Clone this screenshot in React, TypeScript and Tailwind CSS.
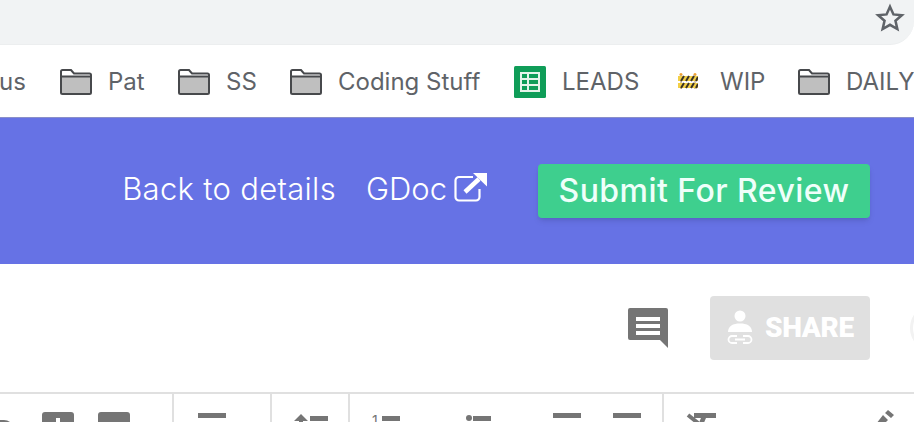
function Folder() {
  return (
    <svg width="32" height="26" viewBox="0 0 32 26" className="shrink-0">
      <path d="M1 8h30v15.500c0 .8-.7 1.500-1.500 1.500h-27C1.700 25 1 24.300 1 23.500Z" fill="#bfbfbf" />
      <path d="M1 23.500V2.500C1 1.700 1.700 1 2.500 1h8.500l3 3.500h15.500c.8 0 1.500.7 1.500 1.500v17.500c0 .8-.7 1.500-1.500 1.500h-27C1.700 25 1 24.300 1 23.500ZM1 7.500h30" fill="none" stroke="#47494c" strokeWidth="2" />
    </svg>
  );
}

function SheetsIcon() {
  return (
    <svg width="32" height="32" viewBox="0 0 32 32" className="shrink-0">
      <rect width="32" height="32" rx="1.500" fill="#0f9d58" />
      <path d="M7 7h18v18H7ZM7 13h18M7 19h18M14 7v18" fill="none" stroke="#e6f4ea" strokeWidth="2" />
    </svg>
  );
}

function BarrierIcon() {
  return (
    <svg width="20" height="20" viewBox="0 0 20 20" className="shrink-0">
      <circle cx="3" cy="2.500" r="1.500" fill="#f0a030" />
      <circle cx="17" cy="2.500" r="1.500" fill="#f0a030" />
      <path d="M3 3v14M17 3v14" stroke="#c9b48a" strokeWidth="1.500" />
      <rect y="4" width="20" height="5" fill="#f3cf45" />
      <rect y="11" width="20" height="5" fill="#f3cf45" />
      <path d="M3 9l3-5M8 9l3-5M13 9l3-5M18 9l2-4M3 16l3-5M8 16l3-5M13 16l3-5M18 16l2-4" stroke="#37322a" strokeWidth="2" />
    </svg>
  );
}

function Bookmark({ label, icon, className }: { label: string; icon: React.ReactNode; className: string }) {
  return (
    <div className={`flex items-center shrink-0 ${className}`}>
      {icon}
      <span className="whitespace-nowrap">{label}</span>
    </div>
  );
}

function ToolbarBar({ className }: { className: string }) {
  return <div className={`h-[5px] bg-[#757575] shrink-0 ${className}`} />;
}

export default function App() {
  return (
    <div className="w-[914px] h-[422px] overflow-hidden bg-white font-['Inter','Liberation_Sans',sans-serif]">
      {/* Browser address bar */}
      <div className="h-[46px] bg-white">
        <div className="h-[45px] bg-[#f1f3f4] border-b border-[#eceeef] rounded-br-[24px] flex justify-end items-center pr-[8px] pb-[9px]">
          <svg width="32" height="32" viewBox="0 0 24 24" fill="none" stroke="#5f6368" strokeWidth="1.900" strokeLinejoin="miter">
            <path d="M12 3.500l2.600 5.800 6.300.6-4.800 4.200 1.400 6.200L12 17.100l-5.500 3.200 1.400-6.200-4.800-4.200 6.300-.6Z" />
          </svg>
        </div>
      </div>

      {/* Bookmarks */}
      <div className="h-[71px] bg-white flex items-center text-[24px] text-[#5f6368] whitespace-nowrap">
        <span className="w-[60px] shrink-0 ml-[-1px] mr-[1px]">us</span>
        <Bookmark label="Pat" icon={<Folder />} className="gap-[16px] w-[118px]" />
        <Bookmark label="SS" icon={<Folder />} className="gap-[16px] w-[112px]" />
        <Bookmark label="Coding Stuff" icon={<Folder />} className="gap-[16px] w-[224px]" />
        <Bookmark label="LEADS" icon={<SheetsIcon />} className="gap-[16px] w-[164px]" />
        <Bookmark label="WIP" icon={<BarrierIcon />} className="gap-[22px] w-[120px]" />
        <Bookmark label="DAILY" icon={<Folder />} className="gap-[16px]" />
      </div>

      {/* Purple header */}
      <div className="h-[147px] bg-[#6672e5] border-t border-[#8a8fc9] flex items-center justify-end pr-[44px] text-white">
        <a className="text-[31px] tracking-[0.3px] font-light text-white mr-[30px] mb-[3px]">Back to details</a>
        <a className="flex items-center text-[31px] font-light text-white mr-[50px] mb-[3px]">
          GDoc
          <svg width="34" height="30" viewBox="0 0 34 30" fill="none" className="ml-[7px] mb-[6px]">
            <path d="M19 5H5a3.500 3.500 0 0 0-3.500 3.500V25A3.500 3.500 0 0 0 5 28.500h17a3.500 3.500 0 0 0 3.500-3.500v-8" stroke="#fff" strokeWidth="2.200" />
            <path d="M11 20 25 7" stroke="#fff" strokeWidth="4.500" />
            <path d="M19 1H33v13.500Z" fill="#fff" />
          </svg>
        </a>
        <button className="w-[332px] h-[54px] rounded-[4px] bg-[#3ecf8e] shadow-md text-[32px] tracking-[0.45px] font-medium text-[#effffa]">
          Submit For Review
        </button>
      </div>

      {/* Document actions */}
      <div className="h-[128px] bg-white relative flex items-center justify-end pr-[44px]">
        <svg width="42" height="42" viewBox="0 0 42 42" className="mr-[41px]">
          <path d="M3 1h36a2 2 0 0 1 2 2v38l-8-8H3a2 2 0 0 1-2-2V3a2 2 0 0 1 2-2Z" fill="#757575" />
          <path d="M9 10h24v4H9ZM9 17h24v4H9ZM9 24h24v4H9Z" fill="#fff" />
        </svg>
        <div className="w-[160px] h-[64px] rounded-[4px] bg-[#e0e0e0] flex items-center pl-[16px] gap-[11px]">
          <svg width="28" height="36" viewBox="0 0 28 36" fill="#fff">
            <circle cx="14" cy="6" r="5.500" />
            <path d="M2 22c0-6 5-8.500 12-8.500S26 16 26 22Z" />
            <path d="M11 26H6a3.500 3.500 0 0 0 0 7h5M17 26h5a3.500 3.500 0 0 1 0 7h-5M9 29.500h10" fill="none" stroke="#fff" strokeWidth="1.800" />
          </svg>
          <span className="font-['Roboto',sans-serif] font-black text-[28px] text-white tracking-[-0.3px]">SHARE</span>
        </div>
        <div className="absolute left-[910px] top-[40px] w-[48px] h-[48px] rounded-full border-[3px] border-[#f2f2f2]" />
      </div>

      {/* Editor toolbar, cut off by the window */}
      <div className="h-[30px] border-t-2 border-[#e0e0e0] flex">
        <div className="w-[174px] border-r-2 border-[#e0e0e0] flex items-start pt-[18px] shrink-0">
          <div className="w-[14px] h-[10px] rounded-tr-full bg-[#757575] mt-[8px] mr-[28px]" />
          <div className="relative w-[32px] h-[20px] rounded-[3px] bg-[#757575] mr-[24px]">
            <div className="absolute left-[14px] top-[6px] w-[4px] h-[14px] bg-white" />
          </div>
          <div className="w-[32px] h-[20px] rounded-[3px] bg-[#757575]" />
        </div>
        <div className="w-[98px] border-r-2 border-[#e0e0e0] pt-[19px] pl-[24px] shrink-0">
          <ToolbarBar className="w-[28px]" />
        </div>
        <div className="w-[78px] border-r-2 border-[#e0e0e0] pt-[21px] pl-[21px] flex shrink-0">
          <svg width="16" height="10" viewBox="0 0 16 10" className="mt-[-1px]">
            <path d="M8 0l7 7H10v3H6V7H1Z" fill="#757575" />
          </svg>
          <ToolbarBar className="w-[18px] ml-[1px] mt-[1px]" />
        </div>
        <div className="w-[314px] border-r-2 border-[#e0e0e0] pl-[22px] flex items-start shrink-0">
          <span className="text-[14px] leading-none text-[#757575] w-[10px] pt-[20px]">1</span>
          <ToolbarBar className="w-[18px] mt-[22px] mr-[66px]" />
          <div className="w-[6px] h-[6px] mt-[21px] rounded-full bg-[#757575] mr-[1px]" />
          <ToolbarBar className="w-[18px] mt-[22px] mr-[62px]" />
          <ToolbarBar className="w-[28px] mt-[19px] mr-[32px]" />
          <ToolbarBar className="w-[28px] mt-[19px]" />
        </div>
        <div className="flex-1 flex items-start justify-between pl-[22px] pr-[20px] pt-[19px]">
          <svg width="30" height="12" viewBox="0 0 30 12">
            <path d="M8 0h22v5H20l-3 7h-5l3-7H8Z" fill="#757575" />
            <path d="M2 2l10 8" stroke="#757575" strokeWidth="4" />
          </svg>
          <svg width="20" height="14" viewBox="0 0 20 14" className="mt-[-3px]">
            <path d="M14 0l6 5-3 3-6-5ZM9 5l5 5-4 4H2Z" fill="#757575" />
          </svg>
        </div>
      </div>
    </div>
  );
}
